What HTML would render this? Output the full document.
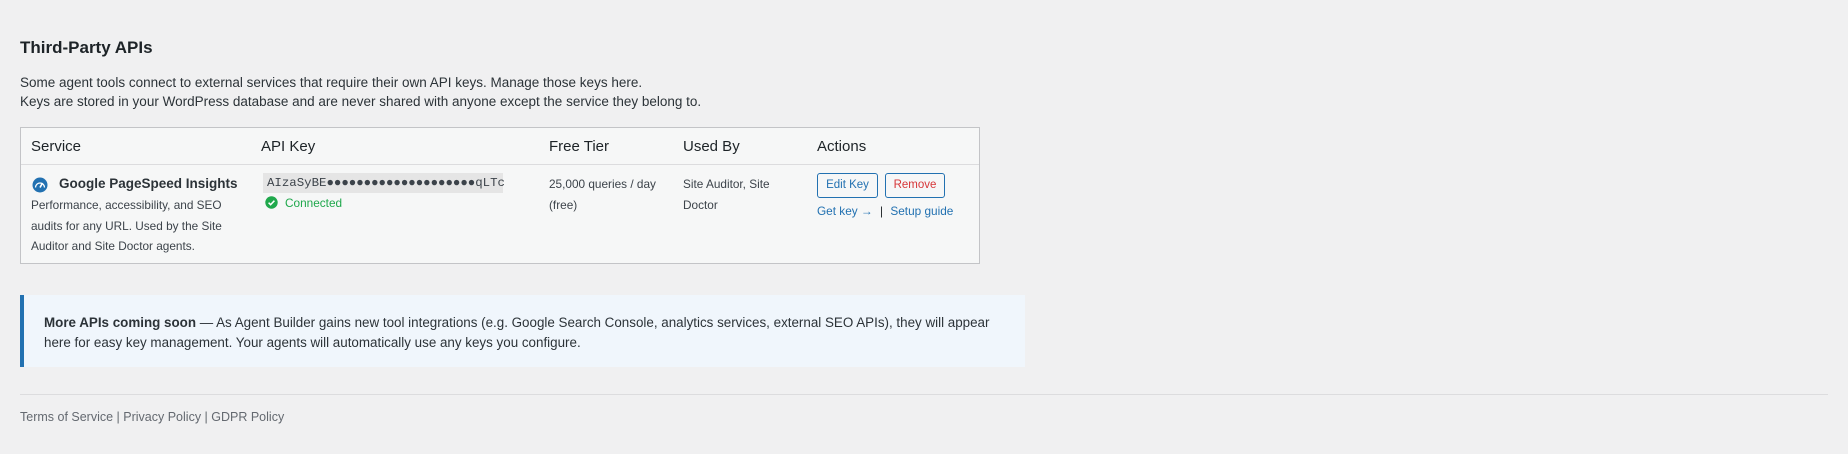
<!DOCTYPE html>
<html><head><meta charset="utf-8"><style>
*{margin:0;padding:0;box-sizing:border-box}
body{width:1848px;height:454px;background:#f0f0f1;font-family:"Liberation Sans",sans-serif;color:#1d2327;position:relative;overflow:hidden}
.a{position:absolute;white-space:nowrap}
h2{position:absolute;left:20px;top:38px;font-size:17px;font-weight:bold}
.p{font-size:13.5px;color:#2c3338}
.tbl{position:absolute;left:20px;top:127px;width:960px;height:137px;border:1px solid #c3c4c7;background:#f6f7f7}
.hd{position:absolute;left:0;top:0;right:0;height:37px;border-bottom:1px solid #dcdcde;background:#f6f7f7}
.th{font-size:15px;top:10px;color:#1d2327}
.sm{font-size:11.8px;color:#3c434a}
.btn{position:absolute;height:25px;border:1px solid #2271b1;border-radius:3px;font-size:11.5px;line-height:23px;text-align:center;background:#f6f7f7;color:#2271b1}
.lk{color:#2271b1;font-size:11.8px}
</style></head><body>
<h2>Third-Party APIs</h2>
<div class="a p" style="left:20px;top:75px">Some agent tools connect to external services that require their own API keys. Manage those keys here.</div>
<div class="a p" style="left:20px;top:94px">Keys are stored in your WordPress database and are never shared with anyone except the service they belong to.</div>
<div class="tbl">
 <div class="hd"></div>
 <div class="a th" style="left:10px">Service</div>
 <div class="a th" style="left:240px">API Key</div>
 <div class="a th" style="left:528px">Free Tier</div>
 <div class="a th" style="left:662px">Used By</div>
 <div class="a th" style="left:796px">Actions</div>
 <svg class="a" style="left:11px;top:49px" width="16" height="16" viewBox="0 0 16 16"><circle cx="8" cy="8" r="7.5" fill="#2271b1"/><path d="M3.5 10.5a4.5 4.5 0 0 1 9 0" stroke="#fff" stroke-width="1.3" fill="none"/><path d="M8 10.5L10.5 6" stroke="#fff" stroke-width="1.6"/></svg>
 <div class="a" style="left:38px;top:48px;font-size:13.5px;font-weight:bold;color:#2c3338">Google PageSpeed Insights</div>
 <div class="a sm" style="left:10px;top:67px;line-height:20.5px">Performance, accessibility, and SEO<br>audits for any URL. Used by the Site<br>Auditor and Site Doctor agents.</div>
 <div class="a" style="left:242px;top:45px;width:240px;height:20px;background:#e5e5e5"></div>
 <div class="a" style="left:246px;top:48px;font-family:'Liberation Mono',monospace;font-size:12.4px;color:#3c434a">AIzaSyBE●●●●●●●●●●●●●●●●●●●●qLTc</div>
 <svg class="a" style="left:244px;top:68px" width="13" height="13" viewBox="0 0 13 13"><circle cx="6.5" cy="6.5" r="6.2" fill="#1fa84c"/><path d="M3.6 6.7l2 2 3.8-4" stroke="#fff" stroke-width="1.5" fill="none"/></svg>
 <div class="a" style="left:264px;top:68px;font-size:11.8px;color:#1fa84c">Connected</div>
 <div class="a sm" style="left:528px;top:46px;line-height:20.5px">25,000 queries / day<br>(free)</div>
 <div class="a sm" style="left:662px;top:46px;line-height:20.5px">Site Auditor, Site<br>Doctor</div>
 <div class="btn" style="left:796px;top:45px;width:61px">Edit Key</div>
 <div class="btn" style="left:864px;top:45px;width:60px;color:#d63638">Remove</div>
 <div class="a lk" style="left:796px;top:76px">Get key → <span style="color:#1d2327;margin:0 4px">|</span> Setup guide</div>
</div>
<div class="a" style="left:20px;top:295px;width:1005px;height:72px;background:#f0f6fc;border-left:4px solid #2271b1"></div>
<div class="a" style="left:44px;top:313px;font-size:13.4px;line-height:19.5px;color:#2c3338">
<b>More APIs coming soon</b> — As Agent Builder gains new tool integrations (e.g. Google Search Console, analytics services, external SEO APIs), they will appear<br>here for easy key management. Your agents will automatically use any keys you configure.</div>
<div class="a" style="left:20px;top:394px;width:1808px;height:1px;background:#dcdcde"></div>
<div class="a" style="left:20px;top:410px;font-size:12.5px;color:#646970">Terms of Service | Privacy Policy | GDPR Policy</div>
</body></html>
